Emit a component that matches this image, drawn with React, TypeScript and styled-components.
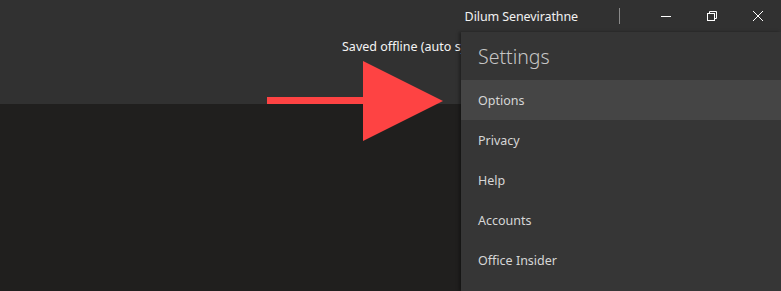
import React from "react";
import styled, { createGlobalStyle } from "styled-components";

const Global = createGlobalStyle`
  html, body { margin: 0; padding: 0; background: #201f1e; }
  body { font-family: "Noto Sans", "Open Sans", sans-serif; }
`;

const Root = styled.div`
  position: relative;
  width: 781px;
  height: 291px;
  overflow: hidden;
  display: flex;
  flex-direction: column;
  background: #201f1e;
`;

const TitleArea = styled.div`
  height: 104px;
  background: #313131;
  display: flex;
  flex-direction: column;
  box-shadow: 0 1px 3px rgba(0, 0, 0, 0.35);
`;

const TopRow = styled.div`
  height: 32px;
  display: flex;
  align-items: center;
  justify-content: flex-end;
`;

const UserName = styled.span`
  color: #f2f2f2;
  font-size: 12.5px;
  margin-right: 41px;
  letter-spacing: -0.1px;
`;

const Separator = styled.div`
  width: 1px;
  height: 16px;
  background: #8a8a8a;
  margin-right: 23px;
`;

const WinButton = styled.div`
  width: 46px;
  height: 32px;
  display: flex;
  align-items: center;
  justify-content: center;
  color: #ffffff;
`;

const StatusRow = styled.div`
  display: flex;
  padding-left: 342px;
  padding-top: 6px;
`;

const StatusText = styled.span`
  color: #f4f4f4;
  font-size: 12.5px;
  white-space: nowrap;
  max-width: 119px;
  overflow: hidden;
`;

const Body = styled.div`
  flex: 1;
  background: #201f1e;
`;

const Panel = styled.div`
  position: absolute;
  left: 461px;
  top: 32px;
  right: 0;
  bottom: 0;
  background: #363636;
  display: flex;
  flex-direction: column;
  box-shadow: -2px 0 3px rgba(0, 0, 0, 0.35);
`;

const PanelHeader = styled.div`
  height: 48px;
  display: flex;
  align-items: center;
  padding-left: 17px;
  color: #c6c6c6;
  font-size: 19.5px;
  font-weight: 300;
  background: #353535;
`;

const MenuItem = styled.div<{ $active?: boolean }>`
  height: 40px;
  display: flex;
  align-items: center;
  padding-left: 17px;
  color: #d6d6d6;
  font-size: 12.5px;
  background: ${(p) => (p.$active ? "#454545" : "transparent")};
`;

const ArrowSvg = styled.svg`
  position: absolute;
  left: 260px;
  top: 55px;
`;

const items = ["Options", "Privacy", "Help", "Accounts", "Office Insider"];

export default function App() {
  return (
    <Root>
      <Global />
      <TitleArea>
        <TopRow>
          <UserName>Dilum Senevirathne</UserName>
          <Separator />
          <WinButton>
            <svg width="12" height="12" viewBox="0 0 12 12">
              <line x1="1" y1="6.5" x2="11" y2="6.5" stroke="#fff" strokeWidth="1" />
            </svg>
          </WinButton>
          <WinButton>
            <svg width="12" height="12" viewBox="0 0 12 12">
              <rect x="1.5" y="3.5" width="7" height="7" fill="none" stroke="#fff" strokeWidth="1" />
              <path d="M3.5 3.5 V1.5 H10.5 V8.5 H8.5" fill="none" stroke="#fff" strokeWidth="1" />
            </svg>
          </WinButton>
          <WinButton>
            <svg width="12" height="12" viewBox="0 0 12 12">
              <path d="M1 1 L11 11 M11 1 L1 11" stroke="#fff" strokeWidth="1" />
            </svg>
          </WinButton>
        </TopRow>
        <StatusRow>
          <StatusText>Saved offline (auto sync is on)</StatusText>
        </StatusRow>
      </TitleArea>
      <Body />
      <Panel>
        <PanelHeader>Settings</PanelHeader>
        {items.map((it, i) => (
          <MenuItem key={it} $active={i === 0}>
            {it}
          </MenuItem>
        ))}
      </Panel>
      <ArrowSvg width="190" height="90" viewBox="0 0 190 90">
        <rect x="7" y="42" width="100" height="7" fill="#fe4343" />
        <polygon points="103,6 183,46 103,86" fill="#fe4343" />
      </ArrowSvg>
    </Root>
  );
}
